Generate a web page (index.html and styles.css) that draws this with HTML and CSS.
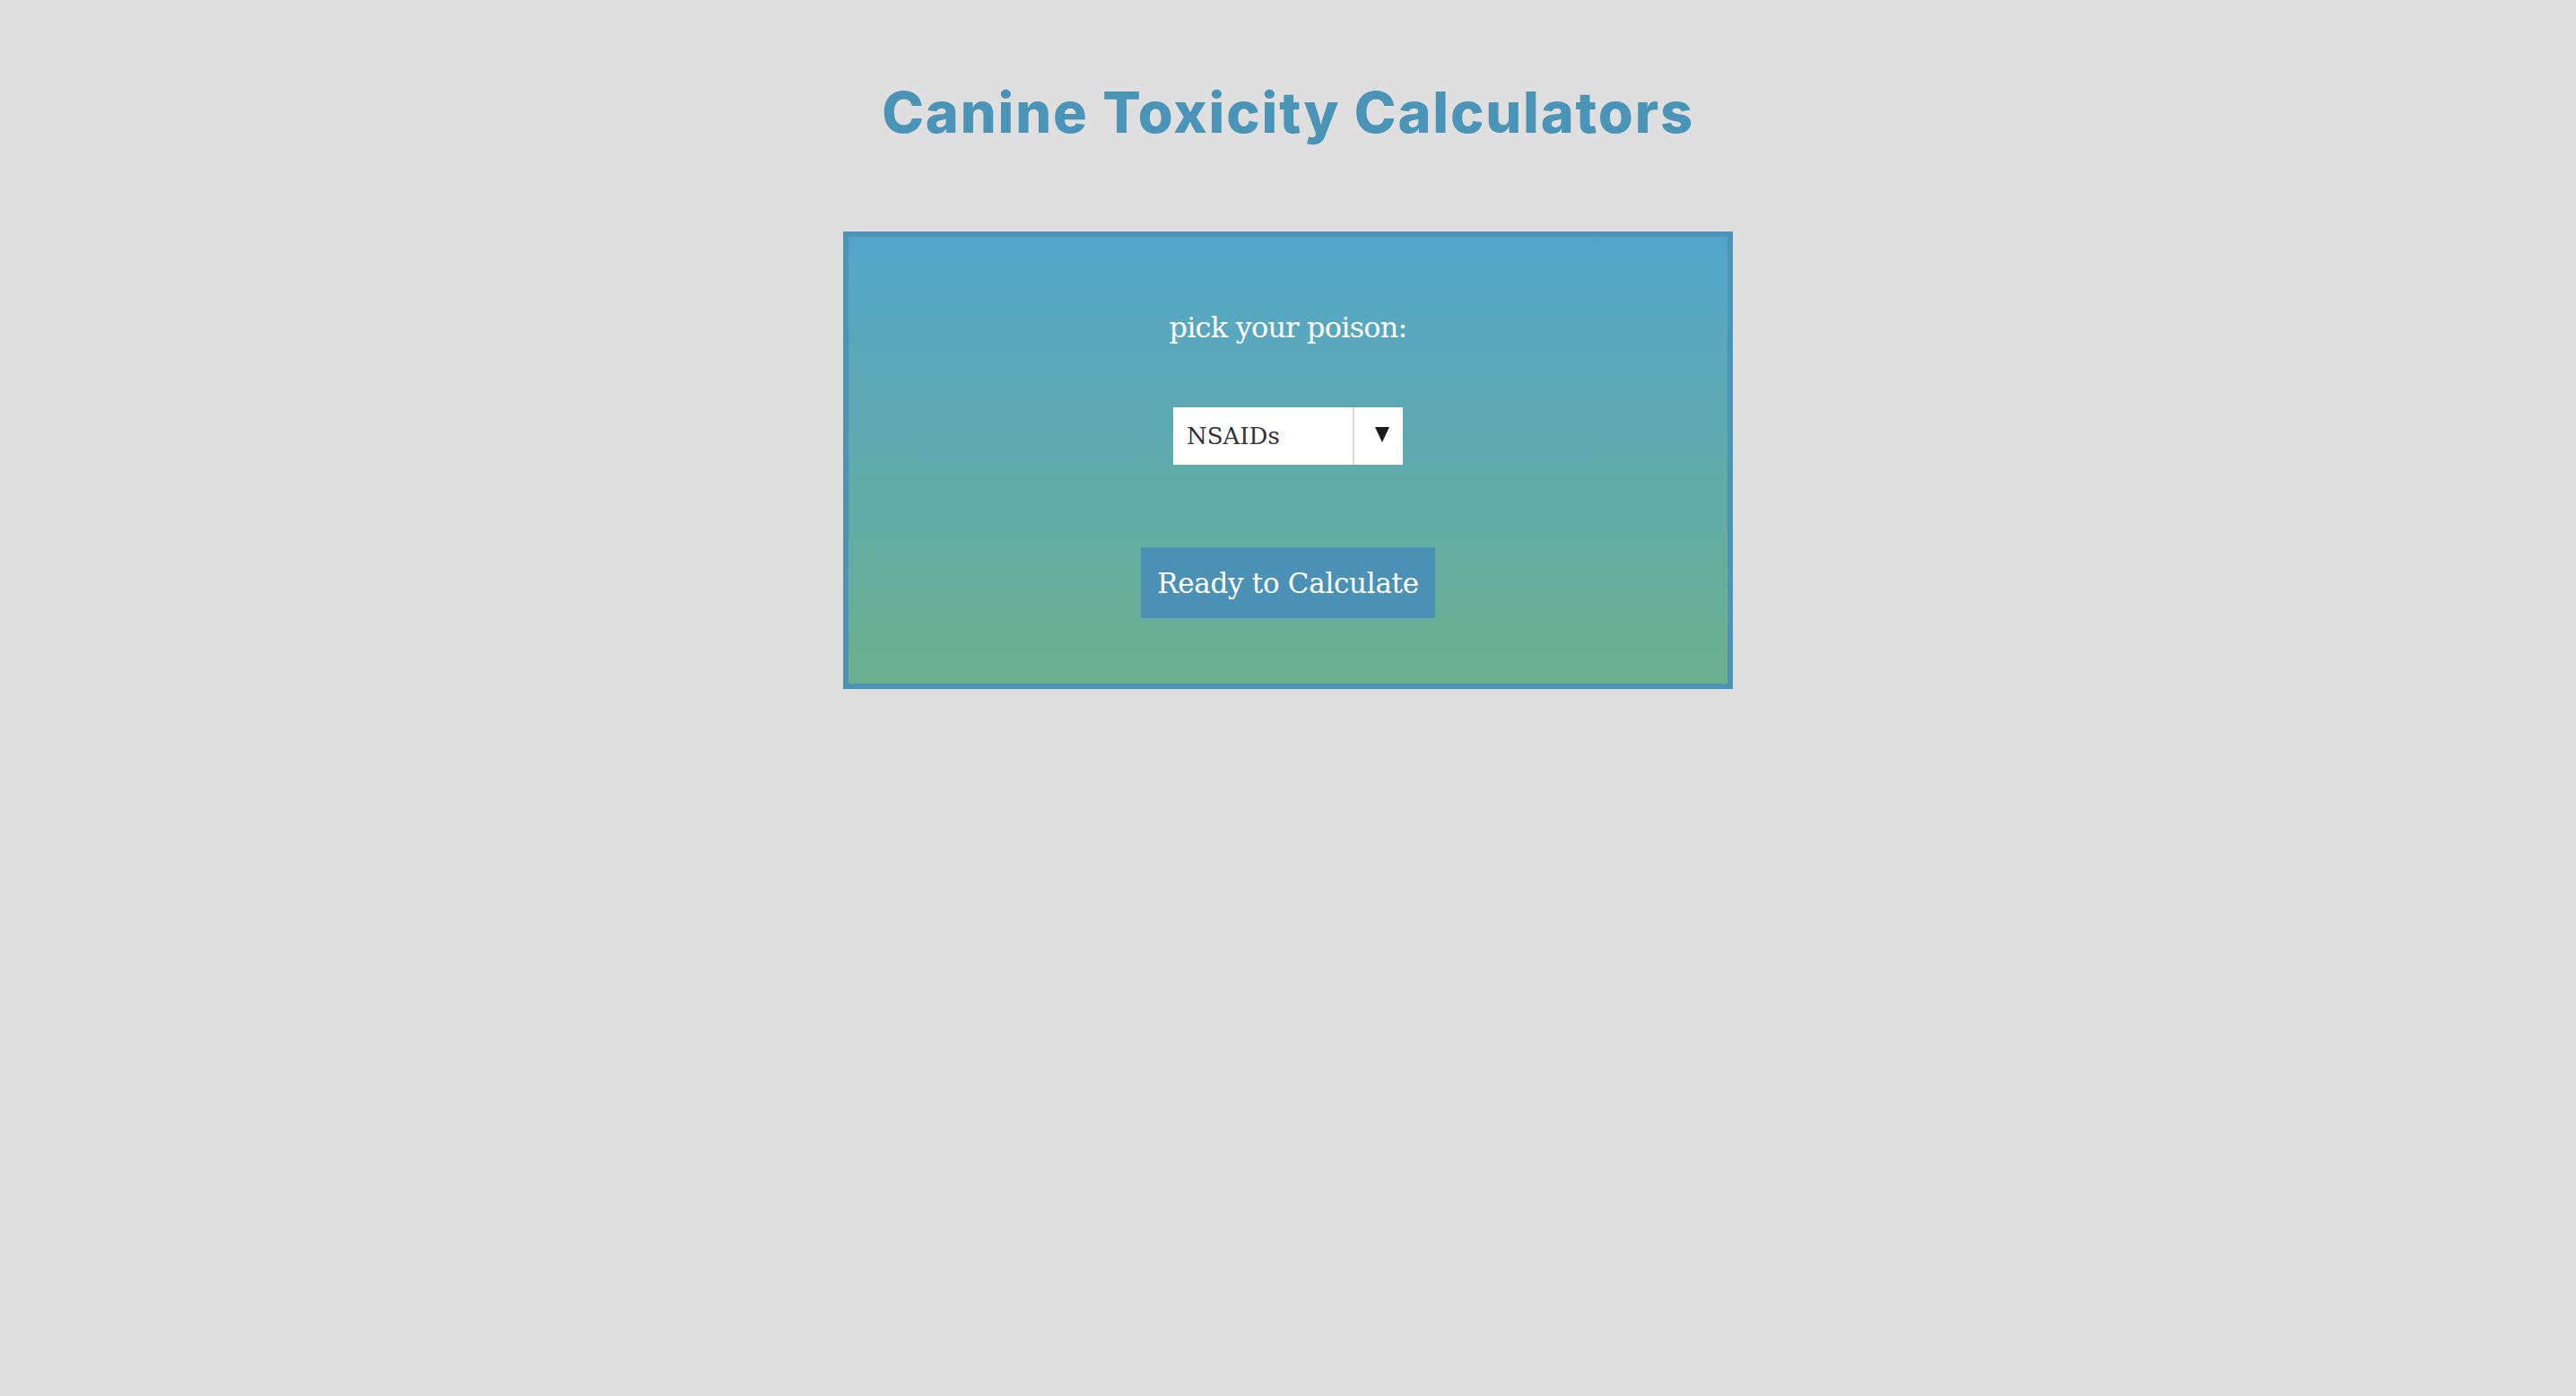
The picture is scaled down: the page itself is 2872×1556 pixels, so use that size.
FILE: index.html
```html
<!DOCTYPE html>
<html lang="en">
<head>
<meta charset="utf-8">
<title>Canine Toxicity Calculators</title>
<link rel="stylesheet" href="styles.css">
</head>
<body>
<main class="page">
  <h1 class="title">Canine Toxicity Calculators</h1>
  <section class="panel">
    <p class="label">pick your poison:</p>
    <div class="select">
      <span class="select-value">NSAIDs</span>
      <span class="select-arrow"><span class="tri"></span></span>
    </div>
    <button class="calc-btn" type="button">Ready to Calculate</button>
  </section>
</main>
</body>
</html>
```
FILE: styles.css
```css
html, body {
  margin: 0;
  padding: 0;
  background: #dfdfdf;
}
.page {
  display: flex;
  flex-direction: column;
  align-items: center;
}
.title {
  margin: 94px 0 0;
  font-family: Inter, "Noto Sans", sans-serif;
  font-weight: 800;
  font-size: 63px;
  line-height: 1;
  letter-spacing: 1.8px;
  color: #4a94b8;
}
.panel {
  box-sizing: border-box;
  width: 992px;
  margin-top: 101px;
  border: 6px solid #4d93b6;
  background: linear-gradient(to bottom, #54a5cb, #6bb08e);
  display: flex;
  flex-direction: column;
  align-items: center;
  padding: 85px 0 73px;
}
.label {
  margin: 0;
  font-family: "DejaVu Serif", serif;
  font-size: 32px;
  line-height: 33px;
  letter-spacing: -0.8px;
  color: #ffffff;
}
.select {
  margin-top: 72px;
  display: flex;
  width: 256px;
  height: 64px;
  background: #ffffff;
}
.select-value {
  flex: 1;
  display: flex;
  align-items: center;
  padding-left: 15px;
  font-family: "DejaVu Serif", serif;
  font-size: 26px;
  color: #333333;
}
.select-arrow {
  width: 56px;
  border-left: 2px solid #dddddd;
  display: flex;
  align-items: center;
  justify-content: center;
  padding-left: 8px;
  box-sizing: border-box;
}
.tri {
  width: 0;
  height: 0;
  border-left: 8px solid transparent;
  border-right: 8px solid transparent;
  border-top: 17px solid #1a1a1a;
  margin-top: -4px;
}
.calc-btn {
  margin-top: 92px;
  width: 328px;
  height: 79px;
  border: 0;
  padding: 0;
  background: #4b91b6;
  color: #ffffff;
  font-family: "DejaVu Serif", serif;
  font-size: 31px;
  letter-spacing: -0.3px;
}
```
